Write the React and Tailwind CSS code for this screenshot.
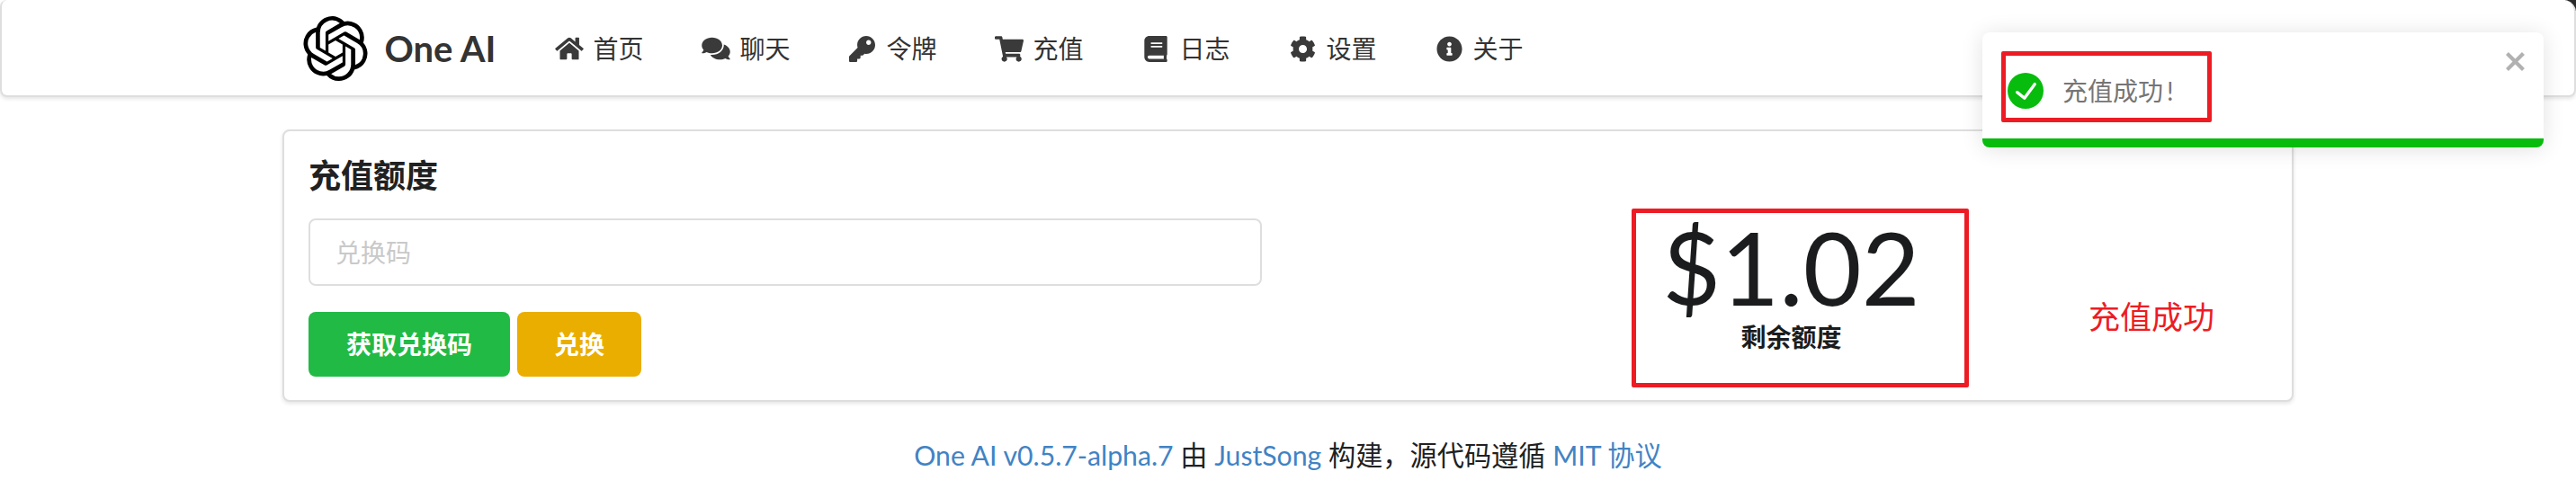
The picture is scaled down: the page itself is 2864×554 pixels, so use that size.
import React from 'react';
import { FaHome, FaComments, FaKey, FaShoppingCart, FaBook, FaCog, FaInfoCircle } from 'react-icons/fa';
import { SiOpenai } from 'react-icons/si';

const items = [
  [FaHome, '首页', 'h-[28px] w-[32px]'],
  [FaComments, '聊天', 'h-[28px] w-[32px]'],
  [FaKey, '令牌', 'h-[29px] w-[29px]'],
  [FaShoppingCart, '充值', 'h-[29px] w-[32px]'],
  [FaBook, '日志', 'h-[29px] w-[26px]'],
  [FaCog, '设置', 'h-[29px] w-[29px]'],
  [FaInfoCircle, '关于', 'h-[29px] w-[29px]'],
];

export default function App() {
  return (
    <div className="relative h-[554px] w-full overflow-hidden bg-white text-[28px] leading-[40px] text-[#212121] font-['Lato','Noto_Sans_CJK_SC',sans-serif]">
      <div className="absolute right-0 top-0 h-[12px] w-[12px] bg-[#2b2b2b]" />
      <nav className="relative h-[108px] rounded-[8px] rounded-tr-[14px] border-2 border-t-0 border-[#dedede] bg-white shadow-[0_2px_4px_rgba(34,36,38,0.12)]">
        <div className="mx-auto flex h-[106px] w-[2235px] items-center pl-[22px] pt-[2px]">
          <div className="flex items-center pr-[33px]">
            <SiOpenai className="h-[72px] w-[72px] text-black" />
            <span className="ml-[19px] text-[40px] font-bold text-[#333]">One AI</span>
          </div>
          {items.map(([Icon, label, size]) => (
            <div key={label} className="flex items-center px-[32px] text-[#333]">
              <span className="mr-[10px] flex w-[33px] justify-center">
                <Icon className={`${size} shrink-0 text-[#3a3a3a]`} />
              </span>
              <span>{label}</span>
            </div>
          ))}
        </div>
      </nav>

      <main className="ml-[314px] mt-[36px] flex h-[303px] w-[2236px] rounded-[8px] border-2 border-[#dedede] bg-white px-[27px] shadow-[0_2px_4px_rgba(34,36,38,0.12)]">
        <div className="w-[1060px] pt-[26px]">
          <h2 className="text-[36px] font-bold leading-[46px] text-[#212121]">充值额度</h2>
          <div className="mt-[25px] flex h-[75px] items-center rounded-[8px] border-2 border-[#dedede] pl-[28px] text-[#c9c9c9]">
            兑换码
          </div>
          <div className="mt-[29px] flex gap-[8px]">
            <button className="h-[72px] w-[224px] rounded-[8px] bg-[#21ba45] text-[28px] font-bold text-white">获取兑换码</button>
            <button className="h-[72px] w-[138px] rounded-[8px] bg-[#eaae00] text-[28px] font-bold text-white">兑换</button>
          </div>
        </div>
        <div className="ml-[411px] mt-[86px] flex h-[199px] w-[375px] flex-col items-center rounded-[2px] border-[5px] border-[#ed1c24] pr-[20px] text-[#1b1c1d]">
          <div className="mt-[4px] text-[112px] leading-[112px]">$1.02</div>
          <div className="mt-[4px] text-[28px] font-bold leading-[36px]">剩余额度</div>
        </div>
        <div className="ml-[133px] mt-[184px] text-[35px] leading-[44px] text-[#ed1c24]">充值成功</div>
      </main>

      <footer className="mt-[39px] text-center text-[30.2px] text-[#212121]">
        <a className="text-[#4183c4]">One AI v0.5.7-alpha.7</a> 由 <a className="text-[#4183c4]">JustSong</a> 构建，源代码遵循 <a className="text-[#4183c4]">MIT 协议</a>
      </footer>

      <div className="absolute right-[36px] top-[36px] flex h-[128px] w-[624px] flex-col justify-between overflow-hidden rounded-[8px] bg-white shadow-[0_2px_24px_rgba(0,0,0,0.12)]">
        <div className="flex items-start justify-between pl-[21px] pr-[16px] pt-[21px]">
          <div className="flex h-[79px] w-[234px] items-center rounded-[2px] border-[5px] border-[#ed1c24] pl-[2px] pt-[9px] text-[#757575]">
            <svg viewBox="0 0 24 24" className="h-[40px] w-[40px] fill-[#07bc0c]">
              <path d="M12 0a12 12 0 1012 12A12.014 12.014 0 0012 0zm6.927 8.2l-6.845 9.289a1.011 1.011 0 01-1.43.188l-4.888-3.908a1 1 0 111.25-1.562l4.076 3.261 6.227-8.451a1 1 0 111.61 1.183z" />
            </svg>
            <span className="ml-[21px]">充值成功</span>
            <span className="ml-[4px]">!</span>
          </div>
          <svg viewBox="0 0 14 16" className="mt-[-5px] h-[32px] w-[28px] fill-black opacity-30">
            <path fillRule="evenodd" d="M7.71 8.23l3.75 3.75-1.48 1.48-3.75-3.75-3.75 3.75L1 11.98l3.75-3.75L1 4.48 2.48 3l3.75 3.75L9.98 3l1.48 1.48-3.75 3.75z" />
          </svg>
        </div>
        <div className="h-[10px] bg-[#07bc0c]" />
      </div>
    </div>
  );
}
